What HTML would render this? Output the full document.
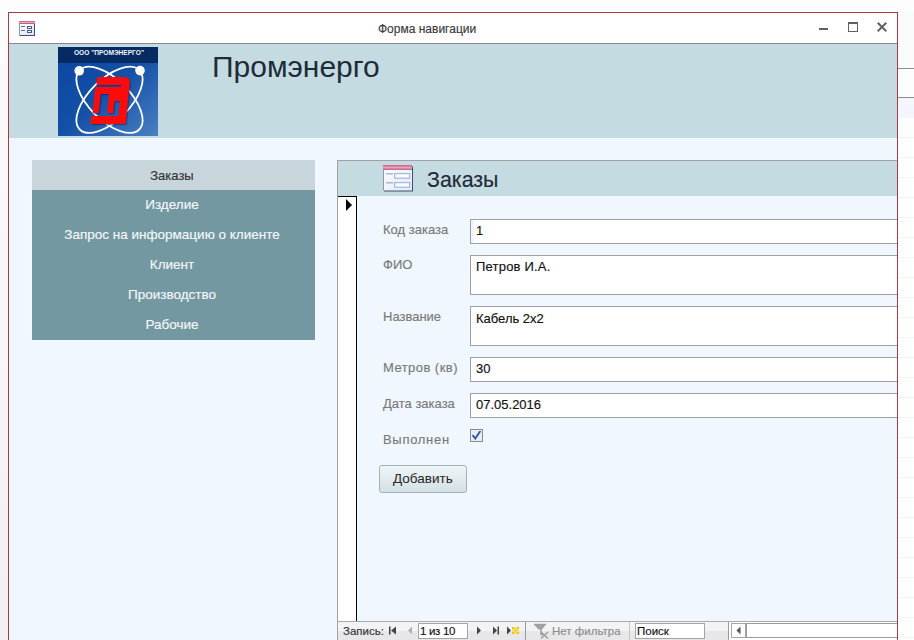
<!DOCTYPE html>
<html><head><meta charset="utf-8">
<style>
html,body{margin:0;padding:0;}
body{width:914px;height:640px;position:relative;overflow:hidden;background:#fdfdfd;font-family:"Liberation Sans",sans-serif;}
.a{position:absolute;}
.t{position:absolute;white-space:nowrap;line-height:1;}
.t,.nv,.lb,.vl,.nb{-webkit-text-stroke:0.15px currentColor}
.nv{position:absolute;left:30.5px;width:283px;text-align:center;white-space:nowrap;line-height:1;font-size:13.5px;color:#f4f7f8}
.lb{position:absolute;left:383px;white-space:nowrap;line-height:1;font-size:13px;color:#7a7a7a}
.vl{position:absolute;left:476px;white-space:nowrap;line-height:1;font-size:13px;color:#111}
.tb{position:absolute;left:470px;width:500px;border:1px solid #a0a0a0;background:#fff}
.nb{position:absolute;white-space:nowrap;line-height:1;font-size:11.5px;color:#333}
</style></head><body>
<!-- outside area -->
<div class="a" style="left:0;top:13px;width:8px;height:627px;background:linear-gradient(#fbfbfb 0,#f8f8f8 200px,#f0f0f0 640px)"></div>
<div class="a" style="left:898px;top:68px;width:16px;height:1px;background:#8c8c8c"></div>
<div class="a" style="left:898px;top:97px;width:16px;height:1px;background:#8c8c8c"></div>
<div class="a" style="left:898px;top:13px;width:16px;height:55px;background:#fafafa"></div>
<div class="a" style="left:898px;top:98px;width:16px;height:20px;background:#f5f5fd"></div>
<div class="a" style="left:898px;top:137px;width:16px;height:503px;background:repeating-linear-gradient(#f3f3f3 0,#f3f3f3 1px,#fff 1px,#fff 20px)"></div>

<!-- window frame -->
<div class="a" style="left:8px;top:12px;width:888px;height:640px;border:1px solid #a83a40;border-bottom:none;background:#f0f7fe"></div>
<!-- clipped content -->
<div class="a" style="left:9px;top:13px;width:888px;height:627px;overflow:hidden">
 <div class="a" style="left:-9px;top:-13px;width:914px;height:640px">
  <!-- title bar -->
  <div class="a" style="left:9px;top:13px;width:888px;height:30px;background:#fff"></div>
  <div class="a" style="left:9px;top:43px;width:888px;height:1px;background:#888"></div>
  <!-- header -->
  <div class="a" style="left:9px;top:44px;width:888px;height:94px;background:#c4dbe2"></div>
  <div class="t" style="left:378px;top:23px;font-size:12px;color:#3a3a3a">Форма навигации</div>
  <div class="t" style="left:212px;top:52px;font-size:30px;color:#1f2b38;-webkit-text-stroke:0">Промэнерго</div>

  <!-- nav -->
  <div class="a" style="left:32px;top:160px;width:283px;height:30px;background:#c8d6db"></div>
  <div class="a" style="left:32px;top:190px;width:283px;height:150px;background:#7498a1"></div>
  <div class="nv" style="top:169px;font-size:13px;color:#333">Заказы</div>
  <div class="nv" style="top:198px">Изделие</div>
  <div class="nv" style="top:227.5px">Запрос на информацию о клиенте</div>
  <div class="nv" style="top:257.7px">Клиент</div>
  <div class="nv" style="top:288px">Производство</div>
  <div class="nv" style="top:318.4px">Рабочие</div>

  <!-- subform -->
  <div class="a" style="left:337px;top:160px;width:600px;height:480px;background:#a2a2a2"></div>
  <div class="a" style="left:338px;top:161px;width:600px;height:35px;background:#c4dbe2"></div>
  <div class="a" style="left:338px;top:196px;width:600px;height:444px;background:#f0f7fe"></div>
  <div class="a" style="left:338px;top:196px;width:19px;height:425px;background:#fff;border-top:1px solid #000;border-right:1px solid #000;box-sizing:border-box"></div>
  <div class="t" style="left:427px;top:169.6px;font-size:21.4px;color:#1f2b38">Заказы</div>
  <svg class="a" style="left:346px;top:199px" width="7" height="12" viewBox="0 0 7 12"><path d="M0 0L6 6L0 12Z" fill="#000"/></svg>

  <!-- labels -->
  <div class="lb" style="top:222.5px">Код заказа</div>
  <div class="lb" style="top:258px">ФИО</div>
  <div class="lb" style="top:310px">Название</div>
  <div class="lb" style="top:361px;letter-spacing:0.45px">Метров (кв)</div>
  <div class="lb" style="top:397px">Дата заказа</div>
  <div class="lb" style="top:433px;letter-spacing:0.7px">Выполнен</div>

  <!-- text boxes -->
  <div class="tb" style="top:219px;height:23px"></div>
  <div class="a" style="left:471px;top:220px;width:3px;height:23px;background:#f2f5fc"></div>
  <div class="tb" style="top:255px;height:38px"></div>
  <div class="tb" style="top:306px;height:38px"></div>
  <div class="tb" style="top:357px;height:23px"></div>
  <div class="tb" style="top:393px;height:23px"></div>
  <div class="vl" style="top:223.5px">1</div>
  <div class="vl" style="top:260px;letter-spacing:0.2px">Петров И.А.</div>
  <div class="vl" style="top:311.5px">Кабель 2х2</div>
  <div class="vl" style="top:362px">30</div>
  <div class="vl" style="top:398px">07.05.2016</div>
  <!-- checkbox -->
  <div class="a" style="left:470px;top:429px;width:11px;height:11px;border:1px solid #8a8a8a;background:#e8ecf4"></div>
  <svg class="a" style="left:472px;top:431px" width="9" height="9" viewBox="0 0 9 9"><path d="M1 4.6L3.3 7.6L8 0.6" stroke="#3550a8" stroke-width="1.8" fill="none" stroke-linecap="round"/></svg>
  <!-- button -->
  <div class="a" style="left:379px;top:465px;width:86px;height:26px;border:1px solid #9fb3b9;border-radius:3px;background:linear-gradient(#f0f5f7,#d3e1e5)"></div>
  <div class="t" style="left:393px;top:471.5px;font-size:13.5px;color:#2a2a2a;-webkit-text-stroke:0.05px currentColor">Добавить</div>

  <!-- navigation bar -->
  <div class="a" style="left:338px;top:621px;width:600px;height:1px;background:#a9a9b0"></div>
  <div class="a" style="left:338px;top:622px;width:600px;height:9px;background:#f3f3f5"></div>
  <div class="a" style="left:338px;top:631px;width:600px;height:9px;background:#e7e7ea"></div>
  

  <!--LOGO-->
<svg class="a" style="left:58px;top:47px" width="100" height="89" viewBox="0 0 100 89">
  <defs>
   <linearGradient id="lb" x1="0" y1="0" x2="1" y2="1"><stop offset="0" stop-color="#0a45a2"/><stop offset="0.5" stop-color="#1450a6"/><stop offset="1" stop-color="#4a80c2"/></linearGradient>
  </defs>
  <rect x="0" y="0" width="100" height="89" fill="url(#lb)"/>
  <rect x="0" y="0" width="100" height="16" fill="#062a62"/>
  <text x="51" y="8.2" text-anchor="middle" font-family="Liberation Sans" font-weight="bold" font-size="6.6" fill="#f2f4f8" textLength="70" lengthAdjust="spacingAndGlyphs">ООО "ПРОМЭНЕРГО"</text>
  <g fill="none" stroke="#ffffff" stroke-width="1.8">
   <ellipse cx="51.5" cy="52.8" rx="42" ry="20.5" transform="rotate(45 51.5 52.8)"/>
   <ellipse cx="51.5" cy="52.8" rx="42" ry="20.5" transform="rotate(-45 51.5 52.8)"/>
  </g>
  <circle cx="21.2" cy="23.8" r="4.8" fill="#fff"/>
  <circle cx="82" cy="23.6" r="4.8" fill="#fff"/>
  <path d="M39.30,30.00L68.30,30.00L67.50,38.00L38.50,38.00ZM63.90,34.00L71.90,34.00L67.60,77.00L59.60,77.00ZM33.40,69.00L68.40,69.00L67.60,77.00L32.60,77.00ZM37.80,40.00L63.30,40.00L62.60,47.00L37.10,47.00ZM37.30,40.00L43.30,40.00L40.70,66.00L34.70,66.00ZM51.80,40.00L57.80,40.00L55.20,66.00L49.20,66.00ZM55.60,47.00L62.60,47.00L61.90,54.00L54.90,54.00ZM64.30,30.00L66.30,30.00L67.23,30.07L68.12,30.29L68.96,30.65L69.71,31.15L70.37,31.76L70.91,32.47L71.32,33.28L71.59,34.15L71.72,35.06L71.70,36.00L71.50,38.00L63.50,38.00Z" fill="#0a2050" opacity="0.45" transform="translate(1.2,1.2)"/>
  <path d="M39.30,30.00L68.30,30.00L67.50,38.00L38.50,38.00ZM63.90,34.00L71.90,34.00L67.60,77.00L59.60,77.00ZM33.40,69.00L68.40,69.00L67.60,77.00L32.60,77.00ZM37.80,40.00L63.30,40.00L62.60,47.00L37.10,47.00ZM37.30,40.00L43.30,40.00L40.70,66.00L34.70,66.00ZM51.80,40.00L57.80,40.00L55.20,66.00L49.20,66.00ZM55.60,47.00L62.60,47.00L61.90,54.00L54.90,54.00ZM64.30,30.00L66.30,30.00L67.23,30.07L68.12,30.29L68.96,30.65L69.71,31.15L70.37,31.76L70.91,32.47L71.32,33.28L71.59,34.15L71.72,35.06L71.70,36.00L71.50,38.00L63.50,38.00Z" fill="#ff0a0a"/>
</svg>
<!--/LOGO-->

  <!-- subform header icon -->
  <svg class="a" style="left:383px;top:165.3px" width="31" height="28" viewBox="0 0 31 28">
   <defs>
    <linearGradient id="ib" x1="0" y1="0" x2="1" y2="1"><stop offset="0" stop-color="#ffffff"/><stop offset="1" stop-color="#e4e8f6"/></linearGradient>
    <linearGradient id="ip" x1="0" y1="0" x2="0" y2="1"><stop offset="0" stop-color="#c65a82"/><stop offset="0.5" stop-color="#e3a6bd"/><stop offset="1" stop-color="#c55a80"/></linearGradient>
   </defs>
   <rect x="1" y="1.5" width="29" height="25" fill="#2c4262" opacity="0.9"/>
   <rect x="0" y="0" width="29" height="25.5" fill="url(#ib)"/>
   <rect x="0" y="5" width="1" height="20.5" fill="#8a96ac"/>
   <rect x="0" y="0" width="29" height="5" fill="url(#ip)"/>
   <rect x="3" y="8" width="7" height="1.6" fill="#a9bfe0"/>
   <rect x="3" y="17" width="7" height="1.6" fill="#a9bfe0"/>
   <rect x="11.6" y="8.6" width="15" height="4.6" fill="#fff" stroke="#a4bce0" stroke-width="1.3"/>
   <rect x="11.6" y="17.6" width="15" height="4.6" fill="#fff" stroke="#a4bce0" stroke-width="1.3"/>
  </svg>

  <!-- nav bar contents -->
  <div class="nb" style="left:343px;top:626px">Запись:</div>
  <svg class="a" style="left:389px;top:626px" width="8" height="9" viewBox="0 0 8 9"><rect x="0" y="0.5" width="1.5" height="8" fill="#444"/><path d="M7 0.5L2 4.5L7 8.5Z" fill="#444"/></svg>
  <svg class="a" style="left:407px;top:626px" width="6" height="9" viewBox="0 0 6 9"><path d="M5 0.5L1 4.5L5 8.5Z" fill="#b0b0b0"/></svg>
  <div class="a" style="left:418px;top:623px;width:48px;height:14px;border:1px solid #a5a5a5;background:#fff"></div>
  <div class="nb" style="left:420px;top:626px;color:#111;letter-spacing:-0.3px">1 из 10</div>
  <svg class="a" style="left:476px;top:626px" width="6" height="9" viewBox="0 0 6 9"><path d="M1 0.5L5 4.5L1 8.5Z" fill="#444"/></svg>
  <svg class="a" style="left:492px;top:626px" width="8" height="9" viewBox="0 0 8 9"><path d="M1 0.5L5 4.5L1 8.5Z" fill="#444"/><rect x="5.5" y="0.5" width="1.5" height="8" fill="#444"/></svg>
  <svg class="a" style="left:506px;top:625px" width="14" height="11" viewBox="0 0 14 11"><path d="M1 1.5L5 5.5L1 9.5Z" fill="#444"/><g fill="#f0c020"><rect x="6" y="2" width="7" height="7" fill="#f8e070"/><rect x="6" y="2" width="2" height="2"/><rect x="11" y="2" width="2" height="2"/><rect x="6" y="7" width="2" height="2"/><rect x="11" y="7" width="2" height="2"/><rect x="8.5" y="4.5" width="2" height="2"/></g></svg>
  <div class="a" style="left:525px;top:622px;width:1px;height:18px;background:#9a9aa2"></div>
  <svg class="a" style="left:533px;top:623px" width="18" height="17" viewBox="0 0 18 17"><path d="M1 1.5H12L8 6.5V11.5H10" stroke="#a0a0a0" stroke-width="1.5" fill="none"/><path d="M1 1.5H12L7.5 6.5H5.5Z" fill="#a0a0a0"/><path d="M8 9L15 15.5M15 9L8 15.5" stroke="#a0a0a0" stroke-width="1.6"/></svg>
  <div class="nb" style="left:552px;top:626px;color:#8c8c8c">Нет фильтра</div>
  <div class="a" style="left:629px;top:622px;width:1px;height:18px;background:#c8c8cc"></div>
  <div class="a" style="left:635px;top:623px;width:68px;height:14px;border:1px solid #a5a5a5;background:#fff"></div>
  <div class="nb" style="left:637px;top:626px;color:#111">Поиск</div>
  <div class="a" style="left:728px;top:622px;width:1px;height:18px;background:#9a9aa2"></div>
  <div class="a" style="left:729px;top:622px;width:200px;height:18px;background:#fff"></div>
  <div class="a" style="left:731px;top:623px;width:13px;height:13px;border:1px solid #a5a5a5;background:#fff"></div>
  <svg class="a" style="left:736px;top:626px" width="5" height="9" viewBox="0 0 5 9"><path d="M4.5 0.5L0.5 4.5L4.5 8.5Z" fill="#555"/></svg>
  <div class="a" style="left:746px;top:623px;width:200px;height:13px;border:1px solid #9a9a9a;background:#fff"></div>

 </div>
</div>
<!-- window controls -->
<div class="a" style="left:819px;top:28px;width:9px;height:2px;background:#616161"></div>
<div class="a" style="left:848px;top:22px;width:8px;height:7px;border:1px solid #616161;border-top-width:2px"></div>
<svg class="a" style="left:877px;top:22px" width="10" height="10" viewBox="0 0 10 10"><path d="M0.7 0.7L9.3 9.3M9.3 0.7L0.7 9.3" stroke="#616161" stroke-width="2"/></svg>
<!-- window icon -->
<svg class="a" style="left:19px;top:21px" width="16" height="15" viewBox="0 0 16 15">
  <defs><linearGradient id="wg" x1="0" y1="0" x2="1" y2="1"><stop offset="0" stop-color="#ffffff"/><stop offset="1" stop-color="#dde3f4"/></linearGradient>
  <linearGradient id="wp" x1="0" y1="0" x2="0" y2="1"><stop offset="0" stop-color="#c8486e"/><stop offset="0.5" stop-color="#e6a9c0"/><stop offset="1" stop-color="#b83a62"/></linearGradient></defs>
  <rect x="0" y="0" width="16" height="15" fill="#3e4e6c"/>
  <rect x="1" y="3" width="14" height="11" fill="url(#wg)"/>
  <rect x="0" y="3" width="1" height="12" fill="#8d9ab4"/>
  <rect x="0" y="0" width="16" height="3" fill="url(#wp)"/>
  <rect x="2" y="5" width="4" height="1" fill="#5a72b0"/>
  <rect x="2" y="9" width="4" height="1" fill="#5a72b0"/>
  <rect x="8.5" y="5.5" width="4" height="2" fill="#fff" stroke="#4c5c84"/>
  <rect x="8.5" y="9.5" width="4" height="2" fill="#fff" stroke="#4c5c84"/>
</svg>
</body></html>
